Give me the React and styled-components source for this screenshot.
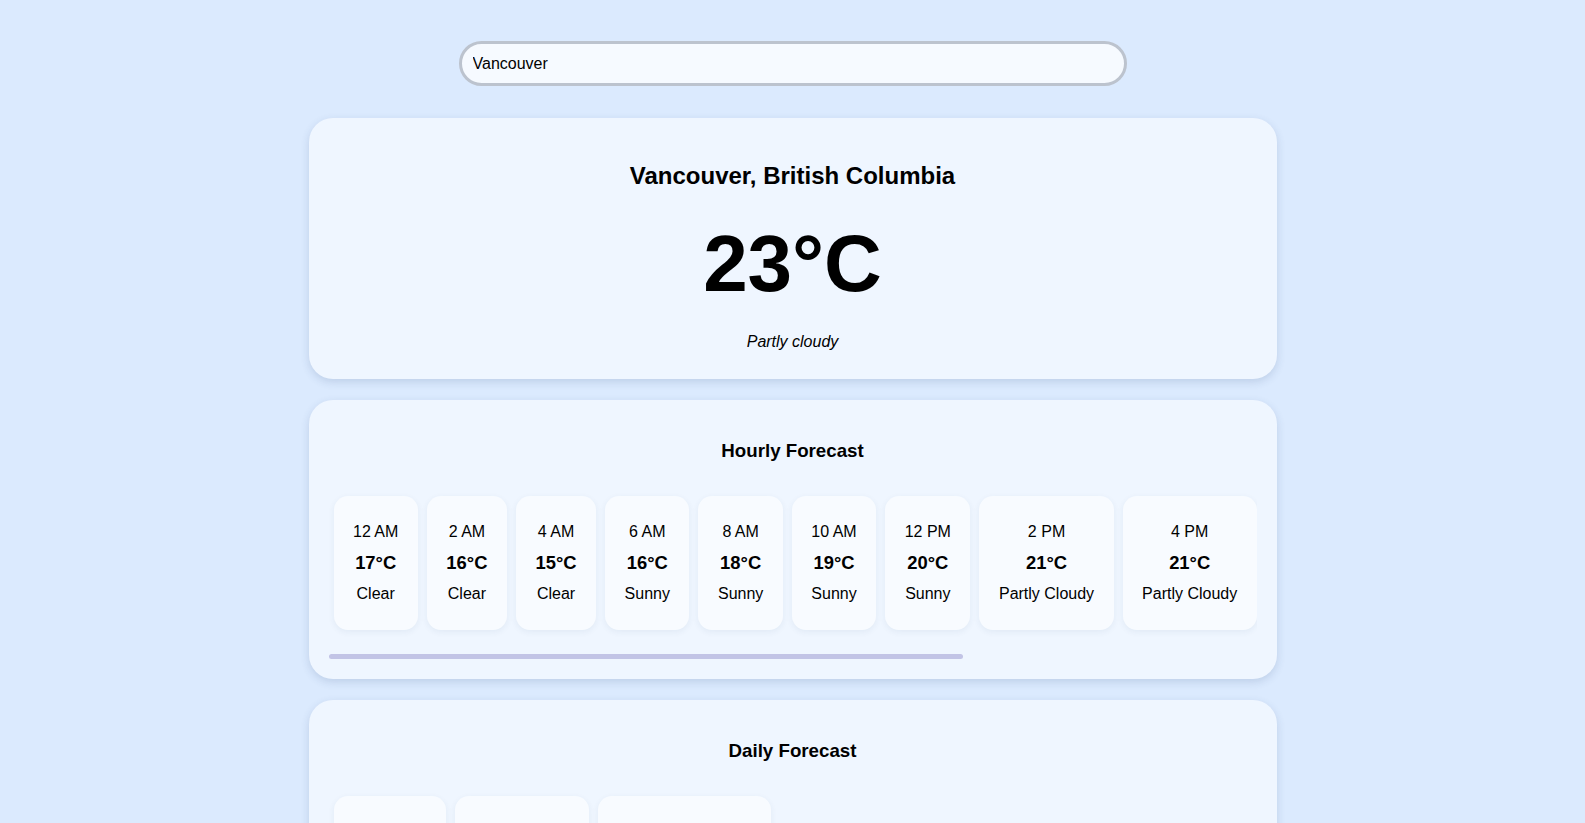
import React, { useLayoutEffect, useRef, useState } from "react";
import styled, { createGlobalStyle } from "styled-components";

const GlobalStyle = createGlobalStyle`
  body {
    margin: 0;
    background: #dbeafe;
    font-family: "Liberation Sans", Arial, Helvetica, sans-serif;
    color: #000;
  }
`;

const Page = styled.div`
  display: flex;
  flex-direction: column;
  align-items: center;
  padding: 41px 0 40px;
`;

const SearchInput = styled.input`
  box-sizing: border-box;
  width: 668px;
  height: 45px;
  margin-bottom: 32px;
  padding: 0 11px;
  border: 3px solid #bcc3ce;
  border-radius: 23px;
  background: #f6faff;
  font: 16px "Liberation Sans", Arial, sans-serif;
  color: #000;
  outline: none;
`;

const Card = styled.section`
  box-sizing: border-box;
  width: 968px;
  margin-bottom: 21px;
  padding: 20px 20px ${(p) => p.$bottom || "20px"};
  background: #eff6ff;
  border-radius: 24px;
  box-shadow: 0 3px 9px rgba(40, 70, 120, 0.16);
  text-align: center;
`;

const City = styled.h2`
  margin: 24px 0 28px;
  font-size: 24px;
  font-weight: 700;
`;

const BigTemp = styled.div`
  margin: 0 0 23px;
  font-size: 80px;
  line-height: 92px;
  font-weight: 700;
`;

const Condition = styled.p`
  margin: 0 0 8px;
  font-size: 16px;
  font-style: italic;
`;

const SectionTitle = styled.h3`
  margin: 20px 0 29px;
  font-size: 18.72px;
  font-weight: 700;
`;

const Scroller = styled.div`
  display: flex;
  gap: 9px;
  padding: 5px 0 ${(p) => p.$bottom || "5px"} 5px;
  overflow-x: auto;
  scrollbar-width: none;

  &::-webkit-scrollbar {
    display: none;
  }
`;

const Track = styled.div`
  height: 5px;
  display: flex;
`;

const Thumb = styled.div`
  height: 100%;
  background: #c2c4e6;
  border-radius: 3px;
`;

const Item = styled.div`
  flex: 0 0 auto;
  display: flex;
  flex-direction: column;
  align-items: center;
  gap: 11px;
  padding: 26px 19.5px 25.5px;
  background: #f8fbff;
  border-radius: 14px;
  box-shadow: 0 2px 6px rgba(40, 70, 120, 0.07);
`;

const Line = styled.span`
  font-size: ${(p) => (p.$bold ? "18.4px" : "16px")};
  font-weight: ${(p) => (p.$bold ? 700 : 400)};
  line-height: 20px;
  white-space: nowrap;
`;

const hourly = [
  { time: "12 AM", temp: 17, cond: "Clear" },
  { time: "2 AM", temp: 16, cond: "Clear" },
  { time: "4 AM", temp: 15, cond: "Clear" },
  { time: "6 AM", temp: 16, cond: "Sunny" },
  { time: "8 AM", temp: 18, cond: "Sunny" },
  { time: "10 AM", temp: 19, cond: "Sunny" },
  { time: "12 PM", temp: 20, cond: "Sunny" },
  { time: "2 PM", temp: 21, cond: "Partly Cloudy" },
  { time: "4 PM", temp: 21, cond: "Partly Cloudy" },
  { time: "6 PM", temp: 20, cond: "Partly Cloudy" },
  { time: "8 PM", temp: 18, cond: "Partly Cloudy" },
  { time: "10 PM", temp: 16, cond: "Partly Cloudy" },
];

const daily = [
  { day: "Mon, Jul 7", temp: 24, cond: "Sunny" },
  { day: "Tue, Jul 8", temp: 22, cond: "Partly Cloudy" },
  { day: "Wed, Jul 9", temp: 19, cond: "Patchy rain nearby" },
];

const ForecastRow = ({ items, label, withBar }) => {
  const rowRef = useRef(null);
  const [ratio, setRatio] = useState(1);

  useLayoutEffect(() => {
    const el = rowRef.current;
    if (el && el.scrollWidth > 0) {
      setRatio(el.clientWidth / el.scrollWidth);
    }
  }, [items]);

  return (
    <>
      <Scroller ref={rowRef} $bottom={withBar ? "24.5px" : "5px"}>
        {items.map((it) => (
          <Item key={it[label]}>
            <Line>{it[label]}</Line>
            <Line $bold>{it.temp}°C</Line>
            <Line>{it.cond}</Line>
          </Item>
        ))}
      </Scroller>
      {withBar && ratio < 1 && (
        <Track>
          <Thumb style={{ width: `${ratio * 100}%` }} />
        </Track>
      )}
    </>
  );
};

const App = () => {
  const [query, setQuery] = useState("Vancouver");

  return (
    <>
      <GlobalStyle />
      <Page>
        <SearchInput
          type="text"
          value={query}
          onChange={(e) => setQuery(e.target.value)}
        />

        <Card>
          <City>Vancouver, British Columbia</City>
          <BigTemp>23°C</BigTemp>
          <Condition>Partly cloudy</Condition>
        </Card>

        <Card $bottom="19.5px">
          <SectionTitle>Hourly Forecast</SectionTitle>
          <ForecastRow items={hourly} label="time" withBar />
        </Card>

        <Card>
          <SectionTitle>Daily Forecast</SectionTitle>
          <ForecastRow items={daily} label="day" />
        </Card>
      </Page>
    </>
  );
};

export default App;
